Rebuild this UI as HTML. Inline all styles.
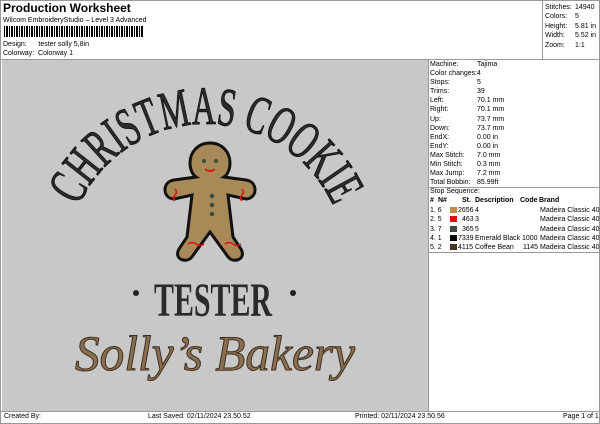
<!DOCTYPE html>
<html><head><style>
*{margin:0;padding:0;box-sizing:border-box}
body{width:600px;height:424px;background:#fff;font-family:"Liberation Sans",sans-serif;color:#000;position:relative;overflow:hidden;font-size:7px}
.a{position:absolute}
</style></head><body>
<div class="a" style="left:0;top:0;width:600px;height:424px;border:1px solid #999"></div>
<div class="a" style="left:3px;top:1px;font-size:12px;font-weight:bold">Production Worksheet</div>
<div class="a" style="left:3px;top:17px">Wilcom EmbroideryStudio – Level 3 Advanced</div>
<div class="a" style="left:4px;top:26px;width:140px;height:11px;background:repeating-linear-gradient(90deg,#000 0 1px,#fff 1px 2px,#000 2px 3px,#000 3px 4px,#fff 4px 5px)"></div>
<div class="a" style="left:3px;top:41px">Design:&nbsp;&nbsp;&nbsp;&nbsp;&nbsp;&nbsp;tester solly 5,8in</div>
<div class="a" style="left:3px;top:50px">Colorway:&nbsp;&nbsp;Colorway 1</div>
<div class="a" style="left:542px;top:0;width:1px;height:59px;background:#999"></div>
<div class="a" style="left:545px;top:3px;line-height:9.4px">Stitches:<br>Colors:<br>Height:<br>Width:<br>Zoom:</div>
<div class="a" style="left:575px;top:3px;line-height:9.4px">14940<br>5<br>5.81 in<br>5.52 in<br>1:1</div>
<div class="a" style="left:0;top:59px;width:600px;height:1px;background:#999"></div>
<div class="a" style="left:2px;top:60px;width:426px;height:351px;background:#c8c8c8"></div>
<div class="a" style="left:428px;top:60px;width:1px;height:351px;background:#999"></div>
<div class="a" style="left:430px;top:60px;line-height:9.1px">Machine:<br>Color changes:<br>Stops:<br>Trims:<br>Left:<br>Right:<br>Up:<br>Down:<br>EndX:<br>EndY:<br>Max Stitch:<br>Min Stitch:<br>Max Jump:<br>Total Bobbin:</div>
<div class="a" style="left:477px;top:60px;line-height:9.1px">Tajima<br>4<br>5<br>39<br>70.1 mm<br>70.1 mm<br>73.7 mm<br>73.7 mm<br>0.00 in<br>0.00 in<br>7.0 mm<br>0.3 mm<br>7.2 mm<br>85.99ft</div>
<div class="a" style="left:429px;top:187px;width:171px;height:1px;background:#999"></div>
<div class="a" style="left:430px;top:188px">Stop Sequence:</div>
<div class="a" style="left:430px;top:197px;font-weight:bold;text-decoration:underline;width:170px;height:9px">
<span class="a" style="left:0">#</span><span class="a" style="left:8px">N#</span><span class="a" style="left:32px">St.</span><span class="a" style="left:45px">Description</span><span class="a" style="left:90px">Code</span><span class="a" style="left:109px">Brand</span></div>
<div class="a" style="left:430px;top:206px;width:170px;line-height:9.3px">
<div style="position:relative;height:9.3px"><span class="a" style="left:0">1. 6</span><span class="a" style="left:20px;top:1px;width:7px;height:6px;background:#c08a40"></span><span class="a" style="left:28px">2656</span><span class="a" style="left:45px">4</span><span class="a" style="left:110px">Madeira Classic 40</span></div>
<div style="position:relative;height:9.3px"><span class="a" style="left:0">2. 5</span><span class="a" style="left:20px;top:1px;width:7px;height:6px;background:#e01010"></span><span class="a" style="left:32px">463</span><span class="a" style="left:45px">3</span><span class="a" style="left:110px">Madeira Classic 40</span></div>
<div style="position:relative;height:9.3px"><span class="a" style="left:0">3. 7</span><span class="a" style="left:20px;top:1px;width:7px;height:6px;background:#3a4a3e"></span><span class="a" style="left:32px">365</span><span class="a" style="left:45px">5</span><span class="a" style="left:110px">Madeira Classic 40</span></div>
<div style="position:relative;height:9.3px"><span class="a" style="left:0">4. 1</span><span class="a" style="left:20px;top:1px;width:7px;height:6px;background:#000"></span><span class="a" style="left:28px">7339</span><span class="a" style="left:45px">Emerald Black</span><span class="a" style="left:92px">1000</span><span class="a" style="left:110px">Madeira Classic 40</span></div>
<div style="position:relative;height:9.3px"><span class="a" style="left:0">5. 2</span><span class="a" style="left:20px;top:1px;width:7px;height:6px;background:#4a3422"></span><span class="a" style="left:28px">4115</span><span class="a" style="left:45px">Coffee Bean</span><span class="a" style="left:93px">1145</span><span class="a" style="left:110px">Madeira Classic 40</span></div>
</div>
<div class="a" style="left:429px;top:252px;width:171px;height:1px;background:#999"></div>
<div class="a" style="left:0;top:411px;width:600px;height:1px;background:#999"></div>
<div class="a" style="left:4px;top:413px">Created By:</div>
<div class="a" style="left:148px;top:413px">Last Saved: 02/11/2024 23.50.52</div>
<div class="a" style="left:355px;top:413px">Printed: 02/11/2024 23.50.56</div>
<div class="a" style="left:563px;top:413px">Page 1 of 1</div>

<svg class="a" style="left:0;top:0" width="600" height="424">
<defs><path id="arc" d="M 66 264 A 140 140 0 0 1 346 264"/></defs>
<text font-family="Liberation Serif,serif" font-size="54" fill="#2a2a2a" stroke="#111" stroke-width="1"><textPath href="#arc" startOffset="60" textLength="320" lengthAdjust="spacingAndGlyphs">CHRISTMAS COOKIE</textPath></text>
<g>
<path d="M210 143 c-12 0 -20 9 -20 20 c0 7 3 12 6 14 l-22 3 c-6 1 -9 5 -9 10 c0 5 4 9 9 9 l18 -4 l-5 42 l-8 12 c-3 5 -1 10 4 11 c5 1 8 -1 11 -6 l16 -22 l16 22 c3 5 6 7 11 6 c5 -1 7 -6 4 -11 l-8 -12 l-5 -42 l18 4 c5 0 9 -4 9 -9 c0 -5 -3 -9 -9 -10 l-22 -3 c3 -2 6 -7 6 -14 c0 -11 -8 -20 -20 -20z" fill="#a88a58" stroke="#111" stroke-width="3"/>
<circle cx="204" cy="161" r="2" fill="#3a4a3e"/><circle cx="216" cy="161" r="2" fill="#3a4a3e"/>
<path d="M205 169 q5 4 10 0" stroke="#e01010" stroke-width="1.6" fill="none"/>
<circle cx="212" cy="196" r="2.2" fill="#3a4a3e"/><circle cx="212" cy="205" r="2.2" fill="#3a4a3e"/><circle cx="212" cy="214" r="2.2" fill="#3a4a3e"/>
<path d="M175 189 q3 3 0 6 q-3 3 0 6" stroke="#e01010" stroke-width="1.5" fill="none"/>
<path d="M242 189 q3 3 0 6 q-3 3 0 6" stroke="#e01010" stroke-width="1.5" fill="none"/>
<path d="M188 244 q4 -3 8 0 q4 3 8 0" stroke="#e01010" stroke-width="1.5" fill="none"/>
<path d="M225 244 q4 -3 8 0 q4 3 8 0" stroke="#e01010" stroke-width="1.5" fill="none"/>
</g>
<circle cx="136" cy="293" r="3" fill="#222"/><circle cx="293" cy="293" r="3" fill="#222"/>
<text x="213" y="316" text-anchor="middle" font-family="Liberation Serif,serif" font-weight="bold" font-size="48" fill="#2a2a2a" textLength="118" lengthAdjust="spacingAndGlyphs">TESTER</text>
<text x="215" y="370" text-anchor="middle" font-family="Liberation Serif,serif" font-style="italic" font-size="50" fill="#8a6e50" stroke="#3e3020" stroke-width="1" textLength="280" lengthAdjust="spacingAndGlyphs">Solly’s Bakery</text>
</svg>
</body></html>
